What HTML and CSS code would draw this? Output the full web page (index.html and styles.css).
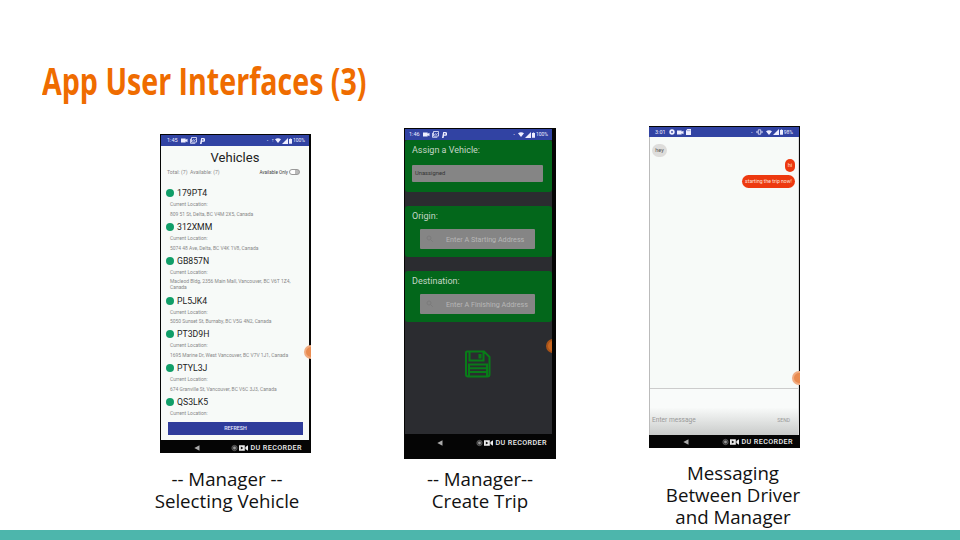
FILE: index.html
```
<!DOCTYPE html>
<html lang="en">
<head>
<meta charset="utf-8">
<title>App User Interfaces (3)</title>
<link rel="stylesheet" href="styles.css">
</head>
<body>
<svg class="defs" aria-hidden="true">
  <symbol id="cam" viewBox="0 0 7 5"><path d="M0 .5h4.600v1.300L6.500.700v3.600L4.600 3.200v1.300H0z"/></symbol>
  <symbol id="pic" viewBox="0 0 7 7"><path d="M1.500.500h5v4.600h-5zM.500 1.800v4.500h4.800M2.400 4l1.100-1.300 1 .800 1-1.200" fill="none" stroke="currentColor" stroke-width=".8"/></symbol>
  <symbol id="park" viewBox="0 0 5 6"><path fill-rule="evenodd" d="M1.200 0h2.100a1.800 1.800 0 0 1 0 3.800H2L1.600 6H0zM2 1.200v1.400h1a.6.6 0 0 0 0-1.400z"/></symbol>
  <symbol id="gear" viewBox="0 0 6 6"><circle cx="3" cy="3" r="2.7"/><circle cx="3" cy="3" r=".9" fill="#3143a3"/></symbol>
  <symbol id="sd" viewBox="0 0 5 6"><path d="M1.400 0H5v6H0V1.400z"/><path d="M1.600 1v1.200M2.700 1v1.200M3.800 1v1.200" stroke="#3143a3" stroke-width=".4"/></symbol>
  <symbol id="wifi" viewBox="0 0 6 5"><path d="M0 1.200Q3-.9 6 1.200L3 5z"/></symbol>
  <symbol id="signal" viewBox="0 0 6 6"><path d="M6 0v6H0z"/></symbol>
  <symbol id="batt" viewBox="0 0 4 7"><path d="M1.200 0h1.600v.700H4V7H0V.700h1.200z"/></symbol>
  <symbol id="vibe" viewBox="0 0 8 6"><path d="M2.600.500h2.800v5H2.600zM1.300 1.700v2.600M.300 2.500v1M6.700 1.700v2.600M7.700 2.500v1" fill="none" stroke="currentColor" stroke-width=".9"/></symbol>
  <symbol id="back" viewBox="0 0 6 6"><path d="M5.500.300v5.400L.300 3z" fill="#aaa"/></symbol>
  <symbol id="rec" viewBox="0 0 18 8"><circle cx="3.5" cy="4" r="2.7" fill="#333" stroke="#777" stroke-width=".6"/><circle cx="3.5" cy="4" r="1.4" fill="#999"/><path fill="#eee" d="M8 1.200h5.800v5.600H8zM14.400 3l2.600-1.800v5.600L14.400 5z"/><path d="M9.800 2.600v2.800L12.400 4z" fill="#111"/></symbol>
  <symbol id="search" viewBox="0 0 8 8"><circle cx="3" cy="3" r="2" fill="none" stroke="#777" stroke-width=".7"/><path d="M4.500 4.500l2.300 2.300" stroke="#777" stroke-width=".7"/></symbol>
</svg>
<div class="slide">
  <h1><span>App User Interfaces (3)</span></h1>
  <main>
    <figure class="f1">
      <div class="phone p1">
        <div class="status"><span>1:45</span><svg class="cam"><use href="#cam"/></svg><svg class="pic"><use href="#pic"/></svg><svg class="park"><use href="#park"/></svg><i></i><b class="dot">·</b><b class="arrow">↑</b><svg class="wifi"><use href="#wifi"/></svg><svg class="signal"><use href="#signal"/></svg><svg class="batt"><use href="#batt"/></svg><span class="pct">100%</span></div>
        <div class="screen">
          <h2>Vehicles</h2>
          <div class="totals"><span>Total: (7)&nbsp; Available: (7)</span><span class="only">Available Only</span><span class="toggle"></span></div>
          <ul>
            <li><h3>179PT4</h3><p>Current Location:</p><p>809 51 St, Delta, BC V4M 2X5, Canada</p></li>
            <li><h3>312XMM</h3><p>Current Location:</p><p>5074 48 Ave, Delta, BC V4K 1V8, Canada</p></li>
            <li class="tall"><h3>GB857N</h3><p>Current Location:</p><p>Macleod Bldg, 2356 Main Mall, Vancouver, BC V6T 1Z4,<br>Canada</p></li>
            <li><h3>PL5JK4</h3><p>Current Location:</p><p>5050 Sunset St, Burnaby, BC V5G 4N2, Canada</p></li>
            <li><h3>PT3D9H</h3><p>Current Location:</p><p>1695 Marine Dr, West Vancouver, BC V7V 1J1, Canada</p></li>
            <li><h3>PTYL3J</h3><p>Current Location:</p><p>674 Granville St, Vancouver, BC V6C 3J3, Canada</p></li>
            <li class="last"><h3>QS3LK5</h3><p>Current Location:</p></li>
          </ul>
          <div class="refresh">REFRESH</div>
        </div>
        <div class="nav"><svg class="back"><use href="#back"/></svg><svg class="rec"><use href="#rec"/></svg><span>DU RECORDER</span></div>
        <div class="bubble"></div>
      </div>
      <figcaption>-- Manager --<br>Selecting Vehicle</figcaption>
    </figure>
    <figure class="f2">
      <div class="phone p2">
        <div class="status"><span>1:46</span><svg class="cam"><use href="#cam"/></svg><svg class="pic"><use href="#pic"/></svg><svg class="park"><use href="#park"/></svg><i></i><b class="dot">·</b><svg class="wifi"><use href="#wifi"/></svg><svg class="signal"><use href="#signal"/></svg><svg class="batt"><use href="#batt"/></svg><span class="pct">100%</span></div>
        <div class="screen">
          <section><h4>Assign a Vehicle:</h4><div class="select">Unassigned</div></section>
          <section><h4>Origin:</h4><div class="input"><svg><use href="#search"/></svg><span>Enter A Starting Address</span></div></section>
          <section><h4>Destination:</h4><div class="input"><svg><use href="#search"/></svg><span>Enter A Finishing Address</span></div></section>
          <svg class="save" viewBox="0 0 26 28"><path d="M2 1.500h17L24.500 7v17.500a2 2 0 0 1-2 2H3a2 2 0 0 1-2-2V2.500a1 1 0 0 1 1-1zM4.500 2v8.500h14V2M4 26V14.500h18V26M4 18.200h18M4 22h18" fill="none" stroke="#087c18" stroke-width="2"/><path d="M13.500 4h3v4.500h-3z" fill="#087c18"/></svg>
        </div>
        <div class="nav"><svg class="back"><use href="#back"/></svg><svg class="rec"><use href="#rec"/></svg><span>DU RECORDER</span></div>
        <div class="bubble"></div>
      </div>
      <figcaption>-- Manager--<br>Create Trip</figcaption>
    </figure>
    <figure class="f3">
      <div class="phone p3">
        <div class="status"><span>3:01</span><svg class="gear"><use href="#gear"/></svg><svg class="cam"><use href="#cam"/></svg><svg class="sd"><use href="#sd"/></svg><i></i><b class="dot">·</b><svg class="vibe"><use href="#vibe"/></svg><svg class="wifi"><use href="#wifi"/></svg><svg class="signal"><use href="#signal"/></svg><svg class="batt"><use href="#batt"/></svg><span class="pct">98%</span></div>
        <div class="screen">
          <div class="chat"><div class="msg in">hey</div><div class="msg hi">hi</div><div class="msg out">starting the trip now!</div></div>
          <div class="compose"><span>Enter message</span><span class="send">SEND</span></div>
        </div>
        <div class="nav"><svg class="back"><use href="#back"/></svg><svg class="rec"><use href="#rec"/></svg><span>DU RECORDER</span></div>
        <div class="bubble"></div>
      </div>
      <figcaption>Messaging<br>Between Driver<br>and Manager</figcaption>
    </figure>
  </main>
  <footer></footer>
</div>
</body>
</html>
```
FILE: styles.css
```
* { box-sizing: border-box; margin: 0; padding: 0; }
body { background: #fff; overflow: hidden; }
svg { display: block; flex: none; fill: currentColor; }
.defs { position: absolute; width: 0; height: 0; }
.slide { width: 960px; height: 540px; display: flex; flex-direction: column; }
h1 { height: 126px; padding: 53px 0 0 42px; font: 700 38px/54px "Open Sans", sans-serif; color: #ef6c00; white-space: nowrap; }
h1 span { display: inline-block; transform: scaleX(.753); transform-origin: 0 50%; }
main { height: 404px; display: grid; grid-template-columns: 151px 152px 151px; column-gap: 93px; padding-left: 160px; }
footer { height: 10px; background: #4db6ac; }
figure { display: flex; flex-direction: column; align-items: center; }
.f1 { padding-top: 8px; }
.f2 { padding-top: 2px; }
figcaption { font: 18.7px/22px "Open Sans", sans-serif; color: #111; text-align: center; white-space: nowrap; }
.f1 figcaption { margin: 15px 17px 0 0; }
.f2 figcaption { margin-top: 9px; }
.f3 figcaption { margin: 14px 0 0 17px; }

.phone { position: relative; width: 100%; flex: none; display: flex; flex-direction: column; font-family: Roboto, sans-serif; background: #050505; overflow: hidden; }
.p1 { height: 319px; padding: 1px 2px 0 1px; }
.p2 { height: 331px; padding: 1px 4px 0 1px; }
.p3 { height: 322px; padding: 1px 1px 0 0; }
.status { height: 11px; flex: none; background: #3143a3; color: #eef; display: flex; align-items: center; padding: 0 4px 0 6px; font-size: 5.5px; line-height: 11px; }
.status i { flex: 1; }
.status span:first-child { width: 14px; }
.cam { width: 7px; height: 5px; margin-right: 2px; }
.pic { width: 7px; height: 7px; margin-right: 3px; }
.park { width: 5px; height: 6px; }
.gear { width: 6px; height: 6px; margin-right: 2px; }
.sd { width: 5px; height: 6px; }
.dot { margin-right: 3px; }
.arrow { font-size: 5px; margin-right: 1px; }
.vibe { width: 7px; height: 6px; margin-right: 3px; }
.wifi { width: 6px; height: 5px; margin-right: 1px; }
.signal { width: 6px; height: 6px; margin-right: 1px; }
.batt { width: 3px; height: 6px; margin-right: 1px; }
.pct { font-size: 5px; }
.nav { flex: none; height: 12px; display: flex; align-items: center; color: #eee; padding-right: 7px; }
.back { width: 6px; height: 6px; margin-left: 33px; }
.rec { width: 18px; height: 8px; margin: 0 1px 0 auto; }
.nav span { font: 500 7.2px/12px Roboto, sans-serif; letter-spacing: .4px; white-space: nowrap; }
.bubble { position: absolute; right: -7px; width: 14px; height: 14px; border-radius: 50%; background: #e98b50; border: 2px solid #f0ab80; }
.screen { flex: 1; min-height: 0; display: flex; flex-direction: column; }

.p1 .screen { background: #f7faf8; }
.p1 h2 { font-size: 13px; font-weight: 400; line-height: 20px; height: 20px; margin-top: 2px; text-align: center; color: #222; }
.totals { display: flex; align-items: center; height: 12px; margin-top: -2px; padding: 0 9px 0 6px; font-size: 5.15px; color: #888; white-space: nowrap; }
.only { margin-left: auto; color: #444; font-size: 4.6px; }
.toggle { width: 11px; height: 6px; border: 1px solid #999; border-radius: 3px; margin-left: 1px; background: linear-gradient(90deg, #fff 55%, #bbb 55%); }
.p1 ul { list-style: none; padding: 8px 0 0 5px; height: 241px; }
.p1 li { height: 33.8px; }
.p1 li.tall { height: 40px; }
.p1 li.last { height: 28px; }
.p1 h3 { font-size: 8.7px; font-weight: 400; line-height: 14px; color: #222; display: flex; align-items: center; }
.p1 h3::before { content: ""; width: 8px; height: 8px; border-radius: 50%; background: #109e68; margin-right: 3px; }
.p1 li p { font-size: 4.95px; line-height: 5.7px; color: #888; margin: 2px 0 0 4px; white-space: nowrap; }
.p1 li p + p { margin-top: 4px; }
.refresh { height: 13px; margin: 3px 6px 0 7px; flex: none; background: #2f3c9b; color: #e4e6fa; font-size: 5.3px; font-weight: 500; line-height: 13px; text-align: center; }
.p1 .nav { height: 13px; padding-top: 3px; }
.p1 .bubble { top: 211px; }

.p2 .status { padding-left: 4px; }
.p2 .screen { background: #2b2c30; }
.p2 .nav { height: 25px; padding: 0 5px 7px 0; }
.p2 .back { margin-left: 32px; }
.p2 section { background: #03671b; border-radius: 3px; height: 51px; margin-bottom: 14px; padding: 4px 9px 0 7px; flex: none; }
.p2 section:first-child { height: 52px; margin-bottom: 14px; }
.p2 h4 { font-size: 9px; font-weight: 400; line-height: 12px; color: #c5d6c7; }
.select { height: 17px; margin: 9px 0 0; background: #858585; border-radius: 1px; font-size: 5.8px; line-height: 17px; color: #343434; padding-left: 3px; }
.input { width: 115px; height: 20px; margin: 7px 0 0 8px; background: #858585; border-radius: 1px; display: flex; align-items: center; font-size: 7.2px; color: #b7b7b7; white-space: nowrap; }
.input svg { width: 8px; height: 8px; margin: 0 12px 0 6px; }
.save { width: 26px; height: 28px; margin: 14px auto 0; transform: translateX(-1px); }
.p2 .bubble { top: 211px; right: -4px; background: #c76620; border-color: #a95317; }
.p2 .bubble { clip-path: inset(0 8px 0 0); }

.p3 .status { height: 10px; padding-right: 6px; }
.p3 .screen { background: #f7faf8; border-right: 1px solid #ddd; border-left: 1px solid #bbb; }
.chat { height: 251px; flex: none; padding: 7px 3px 0 2px; display: flex; flex-direction: column; font-size: 5.5px; }
.msg { color: #ffe4dc; background: #ed3910; align-self: flex-end; border-radius: 7px; height: 13px; line-height: 13px; white-space: nowrap; text-align: center; }
.in { background: #dedddb; color: #555; width: 15px; align-self: flex-start; }
.hi { width: 10px; margin-top: 2px; }
.out { width: 53px; margin-top: 3px; font-size: 5.1px; }
.compose { flex: 1; border-top: 1px solid #ccc; background: linear-gradient(#f9fbfa 40%, #c9cbca); display: flex; justify-content: space-between; align-items: flex-start; padding: 27px 8px 0 2px; font-size: 6.6px; line-height: 9px; color: #999; }
.send { font-size: 5px; }
.p3 .nav { height: 13px; padding-right: 6px; }
.p3 .back { margin-left: 34px; }
.p3 .bubble { top: 245px; right: -6px; clip-path: inset(0 6px 0 0); }
```
